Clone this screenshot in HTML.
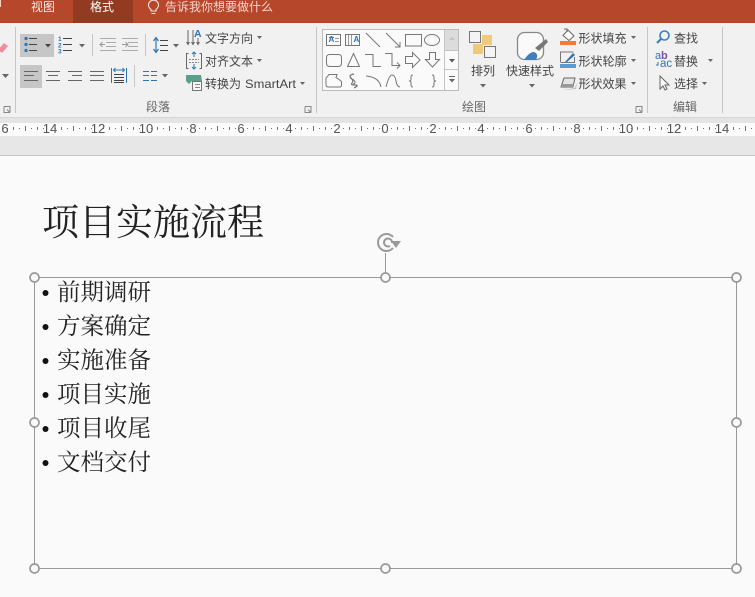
<!DOCTYPE html>
<html><head><meta charset="utf-8"><style>
html,body{margin:0;padding:0;background:#fafafa;width:755px;height:597px;overflow:hidden}
svg{display:block}
.l{font:12px "Liberation Sans","Noto Sans CJK SC",sans-serif;fill:#444}
.s{font-family:"Liberation Serif","Noto Serif CJK SC",serif;fill:#222}
.r{font:13px "Liberation Sans",sans-serif;fill:#555;text-anchor:middle}
.ic{fill:none;stroke:#777;stroke-width:1}
</style></head><body>
<svg width="755" height="597" viewBox="0 0 755 597" xmlns="http://www.w3.org/2000/svg">
<defs>
<pattern id="t" x="0" y="123" width="48" height="12" patternUnits="userSpaceOnUse">
<g fill="#777"><rect x="7" y="5" width="1" height="1"/><rect x="13" y="4" width="1" height="3"/><rect x="19" y="5" width="1" height="1"/><rect x="25" y="3" width="1" height="5"/><rect x="31" y="5" width="1" height="1"/><rect x="37" y="4" width="1" height="3"/><rect x="43" y="5" width="1" height="1"/></g>
</pattern>
</defs>
<rect width="755" height="597" fill="#fafafa"/>
<rect width="755" height="23" fill="#b7472a"/>
<rect x="73" width="60" height="23" fill="#933b20"/>
<rect y="0" width="1" height="7" fill="#f1d0c5"/>
<text x="31" y="11" class="l" style="fill:#fbeae4">视图</text>
<text x="90" y="11" class="l" style="fill:#fff">格式</text>
<g fill="none" stroke="#f7e3dc" stroke-width="1.100"><path d="M151 9.500c-1.500-1.300-2.500-2.700-2.500-4.400a5 5 0 0 1 10 0c0 1.700-1 3.100-2.500 4.400v1.500h-5z"/><path d="M151.500 13.500h4"/></g>
<text x="165" y="11" class="l" style="fill:#f3d6cc">告诉我你想要做什么</text>

<rect y="23" width="755" height="94" fill="#f1f1f1"/>
<g fill="#c6c6c6"><rect x="15" y="27" width="1" height="86"/><rect x="316" y="27" width="1" height="86"/><rect x="647" y="27" width="1" height="86"/><rect x="722" y="27" width="1" height="86"/></g>

<!-- left cut-off -->
<path d="M-2 50l6-7 4 3-6 7z" fill="#ee8d9d"/>
<path d="M2 74h7l-3.500 4z" fill="#666"/>

<!-- paragraph group -->
<rect x="20" y="34" width="34" height="23" fill="#c6c6c6"/>
<rect x="20" y="65" width="22" height="23" fill="#c6c6c6"/>
<g fill="#2e75b6"><circle cx="26" cy="38.500" r="1.600"/><circle cx="26" cy="44.500" r="1.600"/><circle cx="26" cy="50.500" r="1.600"/></g>
<path d="M29 38.500h8M29 44.500h8M29 50.500h8" stroke="#444"/>
<path d="M45 44h6l-3 3.500z" fill="#444"/>
<g fill="#2e75b6" font-family="Liberation Sans" font-size="6.500" font-weight="bold"><text x="58" y="41">1</text><text x="58" y="47.500">2</text><text x="58" y="53.500">3</text></g>
<path d="M63 38.500h9M63 44.500h9M63 50.500h9" stroke="#444"/>
<path d="M79 44h6l-3 3.500z" fill="#666"/>
<rect x="92" y="34" width="1" height="22" fill="#c6c6c6"/>
<path d="M100 38.500h16M106 42.500h10M106 46.500h10M100 50.500h16" stroke="#aaa"/>
<path d="M105 44.500h-5m2.500-2.500l-2.500 2.500 2.500 2.500" stroke="#999" fill="none"/>
<path d="M122 38.500h16M128 42.500h10M128 46.500h10M122 50.500h16" stroke="#aaa"/>
<path d="M122 44.500h6m-2.500-2.500l2.500 2.500-2.500 2.500" stroke="#999" fill="none"/>
<rect x="145" y="34" width="1" height="22" fill="#c6c6c6"/>
<path d="M156 38v14M153.500 41l2.500-3.500 2.500 3.500M153.500 49l2.500 3.500 2.500-3.500" stroke="#2e75b6" fill="none" stroke-width="1.200"/>
<path d="M160 40.500h8M160 45.500h8M160 50.500h8" stroke="#444"/>
<path d="M173 44h6l-3 3.500z" fill="#666"/>

<path d="M24 71.500h14M24 75.500h10M24 80.500h14" stroke="#666"/>
<path d="M46 71.500h14M48 75.500h10M46 80.500h14" stroke="#666"/>
<path d="M68 71.500h14M72 75.500h10M68 80.500h14" stroke="#666"/>
<path d="M90 71.500h14M90 75.500h14M90 80.500h14" stroke="#666"/>
<path d="M111.500 68v15M126.500 68v15" stroke="#2e75b6"/>
<path d="M114 70h10M115.500 68l-2 2 2 2M122.500 68l2 2-2 2" stroke="#2e75b6" fill="none"/>
<path d="M114 74.500h10M114 77.500h10M114 80.500h10M114 82.500h10" stroke="#444"/>
<rect x="134" y="65" width="1" height="22" fill="#c6c6c6"/>
<path d="M143 71.500h6M151 71.500h6M143 75.500h6M151 75.500h6M143 80.500h6M151 80.500h6" stroke="#2e75b6"/>
<path d="M162 74h6l-3 3.500z" fill="#666"/>

<!-- text dir -->
<path d="M188 30v14M193 30v14M198 38v6" stroke="#666"/>
<path d="M186.500 42l1.500 2.500 1.500-2.500M191.500 42l1.500 2.500 1.500-2.500M196.500 42l1.500 2.500 1.500-2.500" stroke="#666" fill="none"/>
<text x="194" y="37" font-family="Liberation Sans" font-size="10.500" font-weight="bold" fill="#2e75b6">A</text>
<text x="205" y="42.500" class="l">文字方向</text>
<path d="M257 36h5l-2.500 3z" fill="#666"/>
<path d="M188.500 53.500h-2v15h2M199.500 53.500h2v15h-2" stroke="#666" fill="none"/>
<path d="M194 52v5M192 54l2-2 2 2M194 64v5M192 67l2 2 2-2" stroke="#2e75b6" fill="none"/>
<path d="M189 59.500h10M189 62.500h10" stroke="#888" stroke-dasharray="2 1"/>
<text x="205" y="65.500" class="l">对齐文本</text>
<path d="M257 59h5l-2.500 3z" fill="#666"/>
<path d="M186 75h15l1 6h-10l-3 3-3-3z" fill="#5aa08c"/>
<rect x="192.500" y="81.500" width="9" height="9" fill="#f8f8f8" stroke="#777"/>
<path d="M195 84.500h5M195 87.500h5" stroke="#888"/>
<text x="205" y="88" class="l">转换为</text>
<text x="245" y="88" class="l" textLength="51" lengthAdjust="spacingAndGlyphs">SmartArt</text>
<path d="M300 82h5l-2.500 3z" fill="#666"/>
<text x="146" y="111" class="l" style="fill:#666">段落</text>
<path d="M4 106.500h6v6M4 106.500v6h6M7 109.500l3 3" fill="none" stroke="#888"/>
<path d="M305 106.500h6v6M305 106.500v6h6M308 109.500l3 3" fill="none" stroke="#888"/>

<!-- shape gallery -->
<rect x="322.500" y="29.500" width="136" height="61" fill="#fafafa" stroke="#bbb"/>
<rect x="445" y="30" width="13" height="20" fill="#dcdcdc"/>
<path d="M444.500 30v60M445 50.500h13M445 69.500h13" stroke="#c4c4c4"/>
<path d="M449 40h6l-3-3.500z" fill="#c4c4c4"/>
<path d="M449 59h6l-3 3.500z" fill="#555"/>
<path d="M449 76.500h6" stroke="#666"/><path d="M449 79h6l-3 3.500z" fill="#666"/>
<g class="ic">
<rect x="326.500" y="34.500" width="14" height="11"/>
<path d="M335 38.500h4M335 41.500h4" stroke="#999"/>
<rect x="345.500" y="34.500" width="14" height="11"/>
<path d="M348.500 35v10M351.500 35v10" stroke="#999"/>
<path d="M366 33l14 14M386 33l14 14M400 42v5h-5"/>
<rect x="405.500" y="34.500" width="16" height="11.500"/>
<ellipse cx="432" cy="40" rx="7.500" ry="5.500"/>
<rect x="326.500" y="54.500" width="15" height="12" rx="3"/>
<path d="M353.500 53.500l-6 13h12z"/>
<path d="M365 54.500h8v12h8M385 53.500h7v12h8M397 62.500l3 3-3 3"/>
<path d="M405.500 56.500h7v-4l7.500 7.500-7.500 7.500v-4h-7z"/>
<path d="M429.500 52.500h6v7h4l-7 7.500-7-7.500h4z"/>
<path d="M326 85v-7l3-3.500h8l-1 3 3 2 2.500 2v3.500q0 2-2 2h-11q-2.500 0-2.500-2z"/>
<path d="M354 74q-6 1-3 4t1 5 3 2-1 3" stroke-width="1.200"/>
<path d="M350 78q5 2 5 4t-2 2"/>
<path d="M366 76q13 1 15 11M386 87q3-12 6-12t4 6 4 6"/>
<path d="M414 75q-2 0-2 2v3l-1.500 1 1.500 1v3q0 2 2 2M433 75q2 0 2 2v3l1.500 1-1.500 1v3q0 2-2 2" transform="translate(-1 0)"/>
</g>
<g><rect x="329" y="37" width="5" height="1" fill="#2e75b6"/></g>
<text x="328.500" y="42" font-family="Liberation Sans" font-size="8" font-weight="bold" fill="#2e75b6">A</text>
<text x="353.500" y="42" font-family="Liberation Sans" font-size="8" font-weight="bold" fill="#2e75b6">A</text>

<!-- arrange -->
<rect x="482" y="35" width="10" height="10" fill="#f0c97c"/>
<rect x="473" y="44" width="10" height="10" fill="#f0c97c"/>
<rect x="469.500" y="31.500" width="11" height="11" fill="#f4f4f4" stroke="#777"/>
<rect x="484.500" y="46.500" width="11" height="11" fill="#f4f4f4" stroke="#777"/>
<text x="471" y="75" class="l">排列</text>
<path d="M480 84h6l-3 3.500z" fill="#666"/>
<!-- quick styles -->
<rect x="517.500" y="32.500" width="26" height="27" rx="7" fill="#fafafa" stroke="#888" stroke-width="1.300"/>
<path d="M535 48l11-9 2 3-9 9z" fill="#777"/>
<path d="M524 60c2-3 5-7 9-8 3 0 5 3 4 5l-1 3z" fill="#3f7fbf"/>
<text x="506" y="75" class="l">快速样式</text>
<path d="M529 84h6l-3 3.500z" fill="#666"/>

<!-- fill etc -->
<rect x="560" y="41" width="16" height="4" fill="#ed7d31"/>
<path d="M568 30l6 6-5 4.500-6-5z" fill="#fafafa" stroke="#666"/>
<path d="M564 29h3v3" stroke="#666" fill="none"/>
<rect x="560" y="64" width="16" height="4" fill="#5b9bd5"/>
<path d="M560.500 62v-10h13M574.500 57v5.500h-14" stroke="#777" fill="none"/>
<path d="M565 62l8-9 2 2-8 7z" fill="#2e75b6"/>
<path d="M563 90l13-1 1-7-2 6z" fill="#bbb"/>
<path d="M561 87l3-9h11l-2 9z" fill="#e4e4e4" stroke="#666"/>
<path d="M561 87h12l1-3h-12z" fill="#999"/>
<text x="578.500" y="42.500" class="l">形状填充</text>
<text x="578.500" y="65.500" class="l">形状轮廓</text>
<text x="578.500" y="88" class="l">形状效果</text>
<g fill="#666"><path d="M631 36h5l-2.500 3z"/><path d="M631 59h5l-2.500 3z"/><path d="M631 82h5l-2.500 3z"/></g>
<text x="462" y="111" class="l" style="fill:#666">绘图</text>
<path d="M636 106.500h6v6M636 106.500v6h6M639 109.500l3 3" fill="none" stroke="#888"/>

<!-- edit -->
<circle cx="664.500" cy="35.500" r="4.500" fill="none" stroke="#3f7fbf" stroke-width="1.600"/>
<path d="M661.500 38.500l-4.500 4.500" stroke="#3f7fbf" stroke-width="2.200"/>
<text x="674" y="42.500" class="l">查找</text>
<text x="655" y="59" font-family="Liberation Sans" font-size="11" fill="#2e75b6">a</text>
<text x="661" y="59" font-family="Liberation Sans" font-size="11" font-weight="bold" fill="#7f4fa5">b</text>
<text x="660" y="67" font-family="Liberation Sans" font-size="11.500" fill="#2e75b6">ac</text>
<path d="M658 62v3h-2" stroke="#2e75b6" fill="none"/>
<text x="674" y="65.500" class="l">替换</text>
<path d="M708 59h5l-2.500 3z" fill="#666"/>
<path d="M660 76v13l3-3 2 4 2-1-2-4h4z" fill="#fafafa" stroke="#666"/>
<text x="674" y="88" class="l">选择</text>
<path d="M702 82h5l-2.500 3z" fill="#666"/>
<text x="673" y="111" class="l" style="fill:#666">编辑</text>

<!-- ruler -->
<rect y="117" width="755" height="6" fill="#e4e4e4"/>
<rect y="123" width="755" height="13" fill="#fcfcfc"/>
<rect y="136" width="755" height="19" fill="#e7e7e7"/>
<rect y="155" width="755" height="1" fill="#c8c8c8"/>
<rect y="117" width="755" height="1" fill="#d6d6d6"/>
<rect y="123" width="755" height="12" fill="url(#t)"/>
<g class="r">
<text x="5" y="133">6</text><text x="50" y="133">14</text><text x="98" y="133">12</text><text x="146" y="133">10</text><text x="193" y="133">8</text><text x="241" y="133">6</text><text x="289" y="133">4</text><text x="337" y="133">2</text><text x="385" y="133">0</text><text x="433" y="133">2</text><text x="481" y="133">4</text><text x="529" y="133">6</text><text x="577" y="133">8</text><text x="626" y="133">10</text><text x="674" y="133">12</text><text x="722" y="133">14</text>
</g>

<!-- slide -->
<text x="42" y="235" class="s" font-size="37">项目实施流程</text>
<g class="s" font-size="23.500">
<text x="57" y="300">前期调研</text>
<text x="57" y="334">方案确定</text>
<text x="57" y="368">实施准备</text>
<text x="57" y="402">项目实施</text>
<text x="57" y="436">项目收尾</text>
<text x="57" y="470">文档交付</text>
</g>
<g fill="#111"><circle cx="45.500" cy="293" r="3"/><circle cx="45.500" cy="327" r="3"/><circle cx="45.500" cy="361" r="3"/><circle cx="45.500" cy="395" r="3"/><circle cx="45.500" cy="429" r="3"/><circle cx="45.500" cy="463" r="3"/></g>

<!-- selection -->
<rect x="34.500" y="277.500" width="702" height="291" fill="none" stroke="#999"/>
<path d="M385.500 253v24" stroke="#999"/>
<g fill="none" stroke="#999" stroke-width="2"><path d="M393 237a8.500 8.500 0 1 0 0 11"/><path d="M392 243a4 4 0 1 0-2 3"/></g>
<path d="M391 241h10l-5 7z" fill="#999"/>
<g fill="#fafafa" stroke="#999" stroke-width="1.700">
<circle cx="34.500" cy="277.500" r="4.500"/><circle cx="385.500" cy="277.500" r="4.500"/><circle cx="736.500" cy="277.500" r="4.500"/>
<circle cx="34.500" cy="422.500" r="4.500"/><circle cx="736.500" cy="422.500" r="4.500"/>
<circle cx="34.500" cy="568.500" r="4.500"/><circle cx="385.500" cy="568.500" r="4.500"/><circle cx="736.500" cy="568.500" r="4.500"/>
</g>
</svg>
</body></html>
